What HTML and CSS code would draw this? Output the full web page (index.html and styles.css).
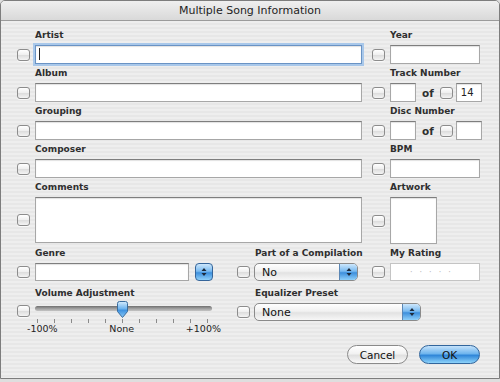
FILE: index.html
```html
<!DOCTYPE html>
<html>
<head>
<meta charset="utf-8">
<title>Multiple Song Information</title>
<link rel="stylesheet" href="styles.css">
</head>
<body>
<div class="window">
  <div class="titlebar">Multiple Song Information</div>
  <div class="content">
    <div class="grid">
      <div class="field c-wide">
        <div class="label">Artist</div>
        <div class="ctl"><span class="cb"></span><div class="input grow focus"><span class="caret"></span></div></div>
      </div>
      <div class="field c-right">
        <div class="label">Year</div>
        <div class="ctl"><span class="cb"></span><div class="input grow"></div></div>
      </div>

      <div class="field c-wide">
        <div class="label">Album</div>
        <div class="ctl"><span class="cb"></span><div class="input grow"></div></div>
      </div>
      <div class="field c-right">
        <div class="label">Track Number</div>
        <div class="ctl"><span class="cb"></span><div class="input small"></div><span class="of">of</span><span class="cb"></span><div class="input small tight">14</div></div>
      </div>

      <div class="field c-wide">
        <div class="label">Grouping</div>
        <div class="ctl"><span class="cb"></span><div class="input grow"></div></div>
      </div>
      <div class="field c-right">
        <div class="label">Disc Number</div>
        <div class="ctl"><span class="cb"></span><div class="input small"></div><span class="of">of</span><span class="cb"></span><div class="input small tight"></div></div>
      </div>

      <div class="field c-wide">
        <div class="label">Composer</div>
        <div class="ctl"><span class="cb"></span><div class="input grow"></div></div>
      </div>
      <div class="field c-right">
        <div class="label">BPM</div>
        <div class="ctl"><span class="cb"></span><div class="input grow"></div></div>
      </div>

      <div class="field c-wide">
        <div class="label">Comments</div>
        <div class="ctl"><span class="cb"></span><div class="input grow area"></div></div>
      </div>
      <div class="field c-right">
        <div class="label">Artwork</div>
        <div class="ctl"><span class="cb"></span><div class="input artwork"></div></div>
      </div>

      <div class="field c-1 r6">
        <div class="label">Genre</div>
        <div class="ctl"><span class="cb"></span><div class="input genre"></div>
          <span class="combo"><svg width="8" height="10" viewBox="0 0 8 10"><path d="M4 1 L6.5 4 H1.5 Z M4 9 L6.5 6 H1.5 Z" fill="#1d2b3c"/></svg></span>
        </div>
      </div>
      <div class="field c-2 r6">
        <div class="label">Part of a Compilation</div>
        <div class="ctl pop"><span class="cb"></span>
          <div class="popup comp"><span class="pv">No</span><span class="parr"><svg width="8" height="10" viewBox="0 0 8 10"><path d="M4 1 L6.5 4 H1.5 Z M4 9 L6.5 6 H1.5 Z" fill="#1d2b3c"/></svg></span></div>
        </div>
      </div>
      <div class="field c-right r6">
        <div class="label">My Rating</div>
        <div class="ctl"><span class="cb"></span><div class="input grow rating"><span>·</span><span>·</span><span>·</span><span>·</span><span>·</span></div></div>
      </div>

      <div class="field c-1">
        <div class="label">Volume Adjustment</div>
        <div class="ctl top slider-row"><span class="cb"></span>
          <div class="slider">
            <div class="track"></div>
            <svg class="knob" width="13" height="18" viewBox="0 0 13 18">
              <defs>
                <linearGradient id="kg" x1="0" y1="0" x2="0" y2="1">
                  <stop offset="0" stop-color="#d6ecfd"/>
                  <stop offset="0.45" stop-color="#6db4ef"/>
                  <stop offset="0.55" stop-color="#3f92df"/>
                  <stop offset="1" stop-color="#8ccaf7"/>
                </linearGradient>
              </defs>
              <path d="M1.5 2.5 Q1.5 0.5 3.5 0.5 H9.5 Q11.5 0.5 11.5 2.5 V10.5 L6.5 16.5 L1.5 10.5 Z" fill="url(#kg)" stroke="#3a6d9e" stroke-width="1"/>
            </svg>
            <div class="ticks"><i></i><i></i><i></i><i></i><i></i><i></i><i></i><i></i><i></i><i></i><i></i></div>
            <div class="slabels"><span>-100%</span><span>None</span><span>+100%</span></div>
          </div>
        </div>
      </div>
      <div class="field c-eq">
        <div class="label">Equalizer Preset</div>
        <div class="ctl pop"><span class="cb"></span>
          <div class="popup eq"><span class="pv">None</span><span class="parr"><svg width="8" height="10" viewBox="0 0 8 10"><path d="M4 1 L6.5 4 H1.5 Z M4 9 L6.5 6 H1.5 Z" fill="#1d2b3c"/></svg></span></div>
        </div>
      </div>
    </div>
    <div class="buttons">
      <button class="btn cancel">Cancel</button>
      <button class="btn ok">OK</button>
    </div>
  </div>
</div>
</body>
</html>
```

FILE: styles.css
```css
html, body {
  margin: 0;
  padding: 0;
  background: #dedede;
}
body {
  width: 500px;
  height: 382px;
  overflow: hidden;
  font-family: "DejaVu Sans", "Liberation Sans", sans-serif;
  color: #222;
}
.window {
  box-sizing: border-box;
  width: 500px;
  height: 379px;
  border: 1px solid #7d7d7d;
  border-radius: 5px 5px 0 0;
  background: repeating-linear-gradient(to bottom, #eeeeee 0, #eeeeee 2px, #e7e7e7 2px, #e7e7e7 4px);
  overflow: hidden;
}
.titlebar {
  height: 19px;
  border-bottom: 1px solid #9b9b9b;
  background: linear-gradient(to bottom, #efefef, #d9d9d9);
  display: flex;
  align-items: center;
  justify-content: center;
  font-size: 11px;
  color: #1e1e1e;
}
.content {
  padding: 8px 19px 0 16px;
}
.grid {
  display: grid;
  grid-template-columns: 196px 24px 125px 10px 108px;
  row-gap: 3px;
}
.c-wide { grid-column: 1 / 4; }
.c-right { grid-column: 5 / 6; }
.c-1 { grid-column: 1 / 2; }
.c-2 { grid-column: 3 / 4; }
.c-eq { grid-column: 3 / 6; }
.r6 { margin-bottom: 3px; }

.label {
  height: 12px;
  line-height: 12px;
  padding-left: 18px;
  font-size: 9px;
  font-weight: bold;
  color: #2f2f2f;
  white-space: nowrap;
}
.ctl {
  display: flex;
  align-items: center;
  gap: 5px;
  margin-top: 4px;
}
.ctl.pop { gap: 4px; }
.ctl.top { align-items: flex-start; }

.cb {
  flex: none;
  box-sizing: border-box;
  width: 13px;
  height: 12px;
  border: 1px solid #8c8c8c;
  border-radius: 3px;
  background: linear-gradient(to bottom, #ffffff 0%, #f0f0f0 45%, #dedede 55%, #f4f4f4 100%);
  box-shadow: 0 1px 0 rgba(255,255,255,0.7);
}
.input {
  box-sizing: border-box;
  height: 19px;
  background: #fff;
  border: 1px solid #a7a7a7;
  border-top-color: #7e7e7e;
  box-shadow: inset 0 1px 1px rgba(0,0,0,0.12);
  font-size: 10px;
  line-height: 17px;
  padding-left: 4px;
  position: relative;
}
.input.grow { flex: 1; }
.input.focus {
  border-color: #6a93c4;
  box-shadow: 0 0 0 2px #a9c8ea, inset 0 1px 1px rgba(0,0,0,0.12);
}
.caret {
  display: block;
  width: 1px;
  height: 12px;
  margin-top: 2px;
  margin-left: -1px;
  background: #222;
}
.input.small { width: 26px; flex: none; }
.input.tight { margin-left: -2px; }
.of {
  font-size: 10.5px;
  font-weight: bold;
  color: #2f2f2f;
  margin: 0 1px;
}
.input.area { height: 46px; }
.input.artwork { width: 47px; height: 47px; flex: none; margin-top: 0; }
.input.genre { width: 154px; flex: none; height: 18px; }
.input.rating {
  height: 18px;
  display: flex;
  align-items: center;
  gap: 7px;
  padding-left: 19px;
  color: #b8b8b8;
  font-size: 8px;
  border-color: #c4c4c4;
  box-shadow: none;
}
.combo {
  flex: none;
  box-sizing: border-box;
  width: 18px;
  height: 18px;
  margin-left: 1px;
  border: 1px solid #35659a;
  border-radius: 4px;
  background: linear-gradient(to bottom, #cde7fc 0%, #79baf0 45%, #3d8fdc 55%, #8fd0fa 100%);
  display: flex;
  align-items: center;
  justify-content: center;
}

.popup {
  box-sizing: border-box;
  height: 18px;
  border: 1px solid #8a8a8a;
  border-radius: 5px;
  background: linear-gradient(to bottom, #ffffff 0%, #f1f1f1 45%, #e2e2e2 55%, #f7f7f7 100%);
  display: flex;
  align-items: center;
  overflow: hidden;
  font-size: 11px;
}
.popup.comp { width: 104px; }
.popup.eq { width: 167px; }
.pv { flex: 1; padding-left: 7px; color: #111; }
.parr {
  width: 17px;
  height: 100%;
  border-left: 1px solid #5b87b5;
  background: linear-gradient(to bottom, #cde7fc 0%, #79baf0 45%, #3d8fdc 55%, #8fd0fa 100%);
  display: flex;
  align-items: center;
  justify-content: center;
}

.slider-row { margin-top: 2px; }
.slider-row .cb { margin-top: 4px; }
.slider {
  position: relative;
  width: 177px;
  height: 36px;
}
.track {
  margin-top: 5px;
  height: 5px;
  border-radius: 3px;
  background: linear-gradient(to bottom, #6f6f6f, #a6a6a6 60%, #c4c4c4);
}
.knob {
  position: absolute;
  left: 81px;
  top: 0;
}
.ticks {
  display: flex;
  justify-content: space-between;
  margin: 8px 4px 0 2px;
  height: 4px;
}
.ticks i {
  width: 1px;
  background: #8a8a8a;
}
.slabels {
  display: flex;
  justify-content: space-between;
  margin: 1px -9px 0 -8px;
  font-size: 9.5px;
  line-height: 10px;
  color: #222;
}

.buttons {
  display: flex;
  justify-content: flex-end;
  gap: 11px;
  margin-top: 8px;
  padding-right: 0;
}
.btn {
  box-sizing: border-box;
  height: 19px;
  border-radius: 10px;
  font-family: "DejaVu Sans", "Liberation Sans", sans-serif;
  font-size: 10.5px;
  padding: 0;
  color: #111;
}
.btn.cancel {
  width: 61px;
  border: 1px solid #8a8a8a;
  background: linear-gradient(to bottom, #ffffff 0%, #f2f2f2 45%, #e0e0e0 55%, #fafafa 100%);
}
.btn.ok {
  width: 61px;
  border: 1px solid #31659c;
  background: linear-gradient(to bottom, #c4e2fb 0%, #6fb5ee 45%, #2f86d8 55%, #8dd3fb 100%);
}
```
